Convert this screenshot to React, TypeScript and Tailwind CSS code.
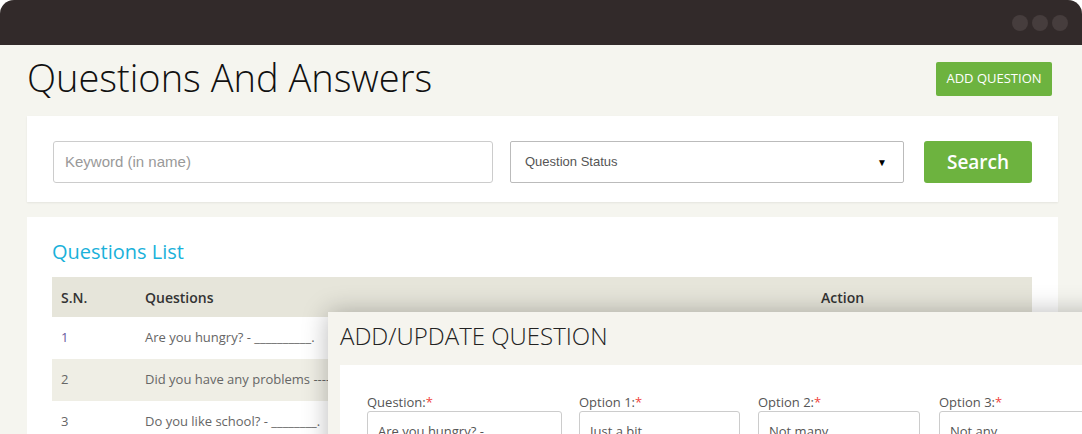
import React from "react";

const rows = [
  { n: "1", q: "Are you hungry? - __________.", link: true },
  { n: "2", q: "Did you have any problems ---------------------------", link: false },
  { n: "3", q: "Do you like school? - ________.", link: false },
];

function Field({ label, value, className }: { label: string; value: string; className: string }) {
  return (
    <div className={className}>
      <div className="h-[18px] text-[13px] leading-[18px] text-[#555]">
        {label}
        <span className="text-[#f0443c]">*</span>
      </div>
      <div className="h-[42px] rounded-[3px] border border-[#ccc] bg-white pl-[10px] pt-[10px] text-[13px] leading-[18px] text-[#555] whitespace-nowrap overflow-hidden">
        {value}
      </div>
    </div>
  );
}

export default function App() {
  return (
    <div className="relative h-[434px] w-[1082px] overflow-hidden bg-white font-['Open_Sans',sans-serif]">
      <div className="flex h-full flex-col overflow-hidden rounded-t-[14px] bg-[#f5f5ef]">
        <div className="flex h-[45px] shrink-0 items-center justify-end gap-[4px] bg-[#322a2a] pr-[14px]">
          <div className="h-[16px] w-[16px] rounded-full bg-[#463d3d]" />
          <div className="h-[16px] w-[16px] rounded-full bg-[#463d3d]" />
          <div className="h-[16px] w-[16px] rounded-full bg-[#463d3d]" />
        </div>
        <div className="pl-[27px] pr-[24px]">
          <div className="flex h-[71px] items-start justify-between pr-[6px] pt-[10px]">
            <h1 className="text-[38px] font-light leading-[45px] text-[#111]">Questions And Answers</h1>
            <button className="mt-[7px] h-[34px] w-[116px] rounded-[2px] bg-[#6db33f] text-[13px] text-white">
              ADD QUESTION
            </button>
          </div>
          <div className="flex h-[86px] items-start bg-white px-[26px] pt-[25px] shadow-[0_1px_2px_rgba(0,0,0,0.07)]">
            <div className="flex h-[42px] w-[440px] items-center rounded-[3px] border border-[#ccc] pl-[11px] font-['Liberation_Sans',Arial,sans-serif] text-[15px] text-[#999]">
              Keyword (in name)
            </div>
            <div className="ml-[17px] flex h-[42px] w-[394px] items-center justify-between rounded-[2px] border border-[#bbb] pl-[14px] pr-[16px] font-['Liberation_Sans',Arial,sans-serif] text-[13px] text-[#555]">
              <span>Question Status</span>
              <span className="text-[10px] text-black">▼</span>
            </div>
            <button className="ml-[20px] h-[42px] w-[108px] rounded-[3px] bg-[#6db33f] text-[19px] font-semibold text-white">
              Search
            </button>
          </div>
          <div className="mt-[15px] bg-white px-[25px] pt-[23px] pb-[20px]">
            <div className="mb-[13px] text-[20px] leading-[24px] text-[#1ab1da]">Questions List</div>
            <div className="w-[980px]">
              <div className="flex h-[40px] items-center bg-[#e6e5da] text-[14px] font-semibold text-[#333]">
                <div className="w-[84px] pl-[9px]">S.N.</div>
                <div className="w-[676px] pl-[9px]">Questions</div>
                <div className="pl-[9px]">Action</div>
              </div>
              {rows.map((r, i) => (
                <div
                  key={r.n}
                  className={`flex h-[42px] items-center text-[13px] text-[#666] ${i % 2 === 1 ? "bg-[#efeee5]" : "bg-white"}`}
                >
                  <div className={`w-[84px] pl-[9px] ${r.link ? "text-[#6a5a9e]" : ""}`}>{r.n}</div>
                  <div className="pl-[9px] whitespace-nowrap">{r.q}</div>
                </div>
              ))}
            </div>
          </div>
        </div>
      </div>

      <div className="absolute left-[328px] top-[312px] h-[200px] w-[800px] bg-[#f5f4ee] shadow-[0_0_24px_rgba(0,0,0,0.28)]">
        <div className="flex h-[53px] items-center pb-[6px] pl-[12px] text-[24px] font-light text-[#222]">ADD/UPDATE QUESTION</div>
        <div className="ml-[12px] h-[200px] bg-white pl-[27px] pt-[28px]">
          <div className="flex">
            <Field label="Question:" value="Are you hungry? -" className="w-[195px]" />
            <Field label="Option 1:" value="Just a bit" className="ml-[17px] w-[161px]" />
            <Field label="Option 2:" value="Not many" className="ml-[18px] w-[162px]" />
            <Field label="Option 3:" value="Not any" className="ml-[19px] w-[162px]" />
          </div>
        </div>
      </div>
    </div>
  );
}
